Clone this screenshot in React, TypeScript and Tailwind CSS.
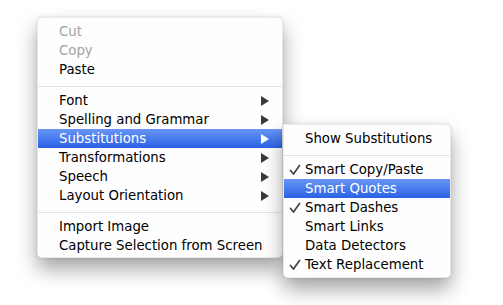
import React from 'react';

type Item =
  | { kind: 'sep' }
  | { kind: 'item'; label: string; disabled?: boolean; sub?: boolean; active?: boolean; checked?: boolean };

const mainItems: Item[] = [
  { kind: 'item', label: 'Cut', disabled: true },
  { kind: 'item', label: 'Copy', disabled: true },
  { kind: 'item', label: 'Paste' },
  { kind: 'sep' },
  { kind: 'item', label: 'Font', sub: true },
  { kind: 'item', label: 'Spelling and Grammar', sub: true },
  { kind: 'item', label: 'Substitutions', sub: true, active: true },
  { kind: 'item', label: 'Transformations', sub: true },
  { kind: 'item', label: 'Speech', sub: true },
  { kind: 'item', label: 'Layout Orientation', sub: true },
  { kind: 'sep' },
  { kind: 'item', label: 'Import Image' },
  { kind: 'item', label: 'Capture Selection from Screen' },
];

const subItems: Item[] = [
  { kind: 'item', label: 'Show Substitutions' },
  { kind: 'sep' },
  { kind: 'item', label: 'Smart Copy/Paste', checked: true },
  { kind: 'item', label: 'Smart Quotes', active: true },
  { kind: 'item', label: 'Smart Dashes', checked: true },
  { kind: 'item', label: 'Smart Links' },
  { kind: 'item', label: 'Data Detectors' },
  { kind: 'item', label: 'Text Replacement', checked: true },
];

const Arrow: React.FC<{ light?: boolean }> = ({ light }) => (
  <svg width="8" height="10" viewBox="0 0 8 10" className="shrink-0">
    <polygon points="0,0 8,5 0,10" fill={light ? '#ffffff' : '#3a3a3a'} />
  </svg>
);

const Check = () => (
  <svg width="12" height="12" viewBox="0 0 12 12" className="absolute left-[5px] top-[4px]">
    <polyline points="1.5,6.5 4.5,10 10.5,1.5" fill="none" stroke="#444" strokeWidth="1.7" strokeLinecap="round" strokeLinejoin="round" />
  </svg>
);

const MenuRow: React.FC<{ item: Item }> = ({ item }) => {
  if (item.kind === 'sep') {
    return (
      <div className="pt-[7px] pb-[4px]">
        <div className="h-px bg-[#e3e3e3]" />
      </div>
    );
  }
  const color = item.active ? 'text-white' : item.disabled ? 'text-[#a3a3a3]' : 'text-black';
  return (
    <div
      className={`relative flex items-center justify-between h-[19px] pl-[21px] pr-[13px] ${color} ${
        item.active ? 'bg-gradient-to-b from-[#6995f4] to-[#2a61e6]' : ''
      }`}
    >
      {item.checked && <Check />}
      <span className="leading-[19px] whitespace-nowrap">{item.label}</span>
      {item.sub && <Arrow light={item.active} />}
    </div>
  );
};

export default function App() {
  return (
    <div
      className="relative w-[503px] h-[305px] bg-white overflow-hidden text-[13.3px]"
      style={{ fontFamily: '"DejaVu Sans", "Liberation Sans", sans-serif' }}
    >
      <div className="ml-[37px] mt-[17px] w-[246px] h-[241px] py-[4px] bg-[#fefefe] rounded-[5px] border border-[#dcdcdc]/60 shadow-[0_11px_20px_rgba(0,0,0,0.36),0_0_3px_rgba(0,0,0,0.12)]">
        {mainItems.map((it, i) => (
          <MenuRow key={i} item={it} />
        ))}
      </div>
      <div className="absolute left-[283px] top-[124px] w-[168px] h-[154px] py-[4px] bg-[#fefefe] rounded-[5px] rounded-tl-none border border-[#dcdcdc]/60 shadow-[0_11px_20px_rgba(0,0,0,0.36),0_0_3px_rgba(0,0,0,0.12)]">
        {subItems.map((it, i) => (
          <MenuRow key={i} item={it} />
        ))}
      </div>
    </div>
  );
}
